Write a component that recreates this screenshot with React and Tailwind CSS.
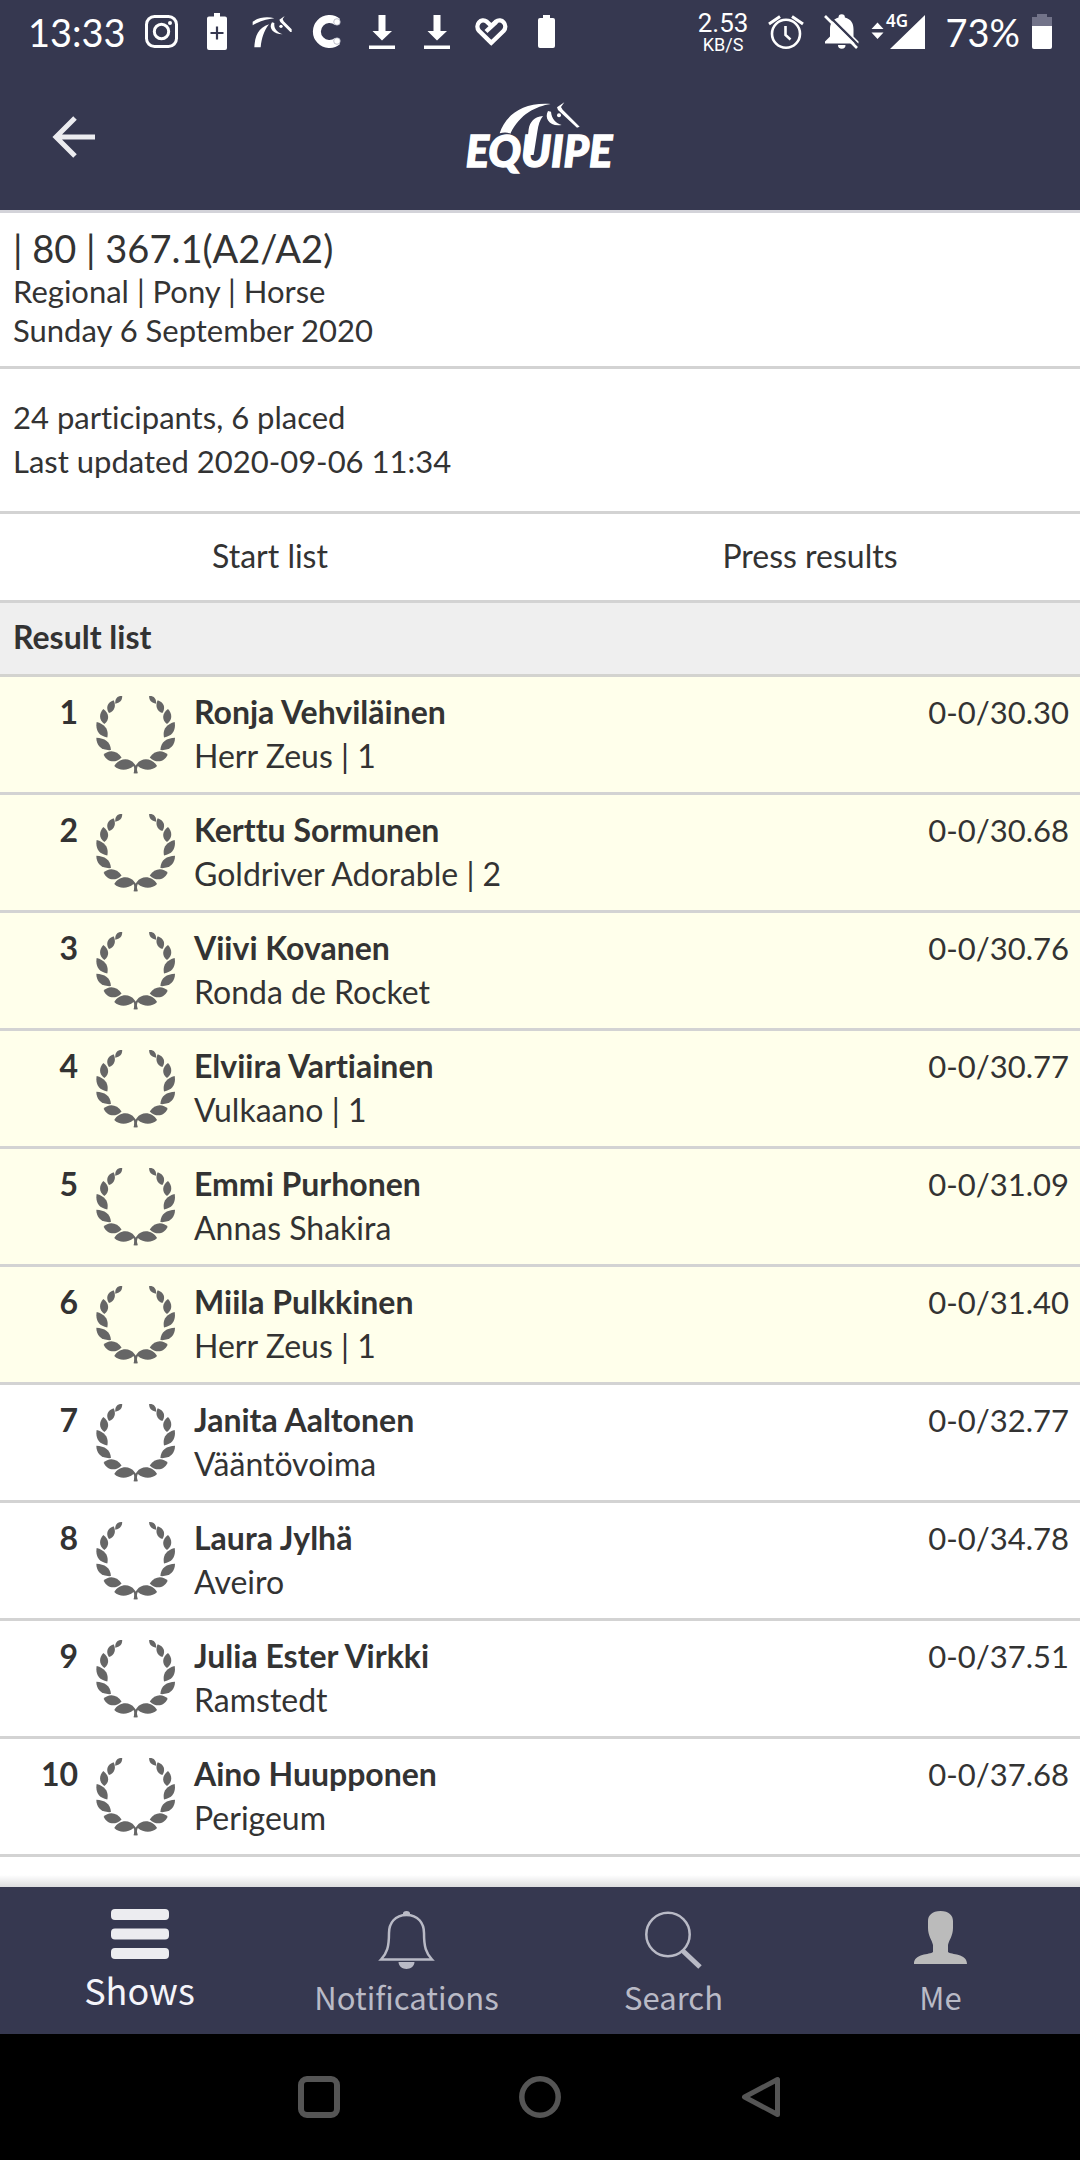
import React, { useState } from 'react';

const results = [
  { id: 1, rider: 'Ronja Vehviläinen', horse: 'Herr Zeus | 1', score: '0-0/30.30', placed: true },
  { id: 2, rider: 'Kerttu Sormunen', horse: 'Goldriver Adorable | 2', score: '0-0/30.68', placed: true },
  { id: 3, rider: 'Viivi Kovanen', horse: 'Ronda de Rocket', score: '0-0/30.76', placed: true },
  { id: 4, rider: 'Elviira Vartiainen', horse: 'Vulkaano | 1', score: '0-0/30.77', placed: true },
  { id: 5, rider: 'Emmi Purhonen', horse: 'Annas Shakira', score: '0-0/31.09', placed: true },
  { id: 6, rider: 'Miila Pulkkinen', horse: 'Herr Zeus | 1', score: '0-0/31.40', placed: true },
  { id: 7, rider: 'Janita Aaltonen', horse: 'Vääntövoima', score: '0-0/32.77', placed: false },
  { id: 8, rider: 'Laura Jylhä', horse: 'Aveiro', score: '0-0/34.78', placed: false },
  { id: 9, rider: 'Julia Ester Virkki', horse: 'Ramstedt', score: '0-0/37.51', placed: false },
  { id: 10, rider: 'Aino Huupponen', horse: 'Perigeum', score: '0-0/37.68', placed: false },
];

// Status bar icons
const InstagramIcon = () => (
  <svg width="33" height="33" viewBox="0 0 33 33" fill="none" stroke="currentColor" strokeWidth="3">
    <rect x="1.5" y="1.5" width="30" height="30" rx="8" />
    <circle cx="16.5" cy="16.5" r="7.2" />
    <circle cx="25" cy="8" r="2" fill="currentColor" stroke="none" />
  </svg>
);

const BatteryPlusIcon = () => (
  <svg width="20" height="37" viewBox="0 0 20 37">
    <path d="M7 0h6v3.500h5a2 2 0 0 1 2 2V35a2 2 0 0 1-2 2H2a2 2 0 0 1-2-2V5.500a2 2 0 0 1 2-2h5z" fill="currentColor" />
    <path d="M10 13.500v13M3.500 20h13" stroke="#363850" strokeWidth="2.200" />
  </svg>
);

const HorseIcon = () => (
  <svg width="40" height="33" viewBox="751 56 120 99" fill="currentColor">
    <path d="M753 76C775 61 800 61 818 66C790 70 775 75 753 87Z" />
    <path d="M758 153C760 118 770 95 802 84C786 105 780 125 777 153Z" />
    <path d="M811 78C799 95 815 114 843 114C826 107 816 98 818 80Z" />
    <circle cx="838" cy="90" r="5" />
    <path d="M849 59L833 70L836 77L866 107L870 107L870 99L846 75L843 68Z" />
  </svg>
);

const CIcon = () => (
  <svg width="30" height="33" viewBox="0 0 30 33" fill="none">
    <path d="M25.500 7A12.500 12.500 0 1 0 25.500 26" stroke="currentColor" strokeWidth="8" />
    <circle cx="25" cy="7" r="3.300" fill="currentColor" stroke="#9496a8" strokeWidth="0.600" />
    <circle cx="25" cy="26" r="3.300" fill="currentColor" stroke="#9496a8" strokeWidth="0.600" />
  </svg>
);

const DownloadIcon = () => (
  <svg width="26" height="34" viewBox="0 0 26 34" fill="currentColor">
    <path d="M9.500 0h7v16H23L13 25.500L3.500 16h6zM0 30.500h26V34H0z" />
  </svg>
);

const HeartIcon = () => (
  <svg width="33" height="28" viewBox="404 55 99 83" fill="none" stroke="currentColor" strokeWidth="13">
    <path d="M453 129L416 93C402 76 422 52 440 66L453 78L466 66C484 52 504 76 490 93Z" />
    <path d="M437 95L468 66" />
  </svg>
);

const BatteryIcon = () => (
  <svg width="17" height="33" viewBox="0 0 17 33" fill="currentColor">
    <path d="M5 0h7v3h3a2 2 0 0 1 2 2v26a2 2 0 0 1-2 2H2a2 2 0 0 1-2-2V5a2 2 0 0 1 2-2h3z" />
  </svg>
);

const AlarmIcon = () => (
  <svg width="36" height="34" viewBox="0 0 36 34" fill="none" stroke="currentColor" strokeWidth="2.600">
    <circle cx="18" cy="18.700" r="14" />
    <path d="M1 9L12 1.500M35 9L24 1.500" strokeWidth="3" />
    <path d="M17.500 11v9l5 4.500" />
  </svg>
);

const BellOffIcon = () => (
  <svg width="35" height="35" viewBox="0 0 35 35">
    <path d="M14.500 3.500a3.200 3.200 0 0 1 6.400 0C27 5 29.500 9.500 29.500 15v7.500l5 5v2H1v-2l5-5V15C6 9.500 9 5 14.500 3.500zM14 31h7.500a3.700 3.700 0 0 1-7.500 0z" fill="currentColor" />
    <path d="M3 0L35 32" stroke="#363850" strokeWidth="2.400" />
    <path d="M1 2L33 34" stroke="currentColor" strokeWidth="2.600" />
  </svg>
);

const SignalIcon = () => (
  <svg width="54" height="36" viewBox="0 0 54 36" fill="currentColor" className="overflow-visible">
    <path d="M6.500 8.500l6 6.500h-12zM.500 18.500h12l-6 6.500zM54 1v34H19z" />
    <text x="15" y="13" className="font-['Noto_Sans'] text-[17px] font-semibold">4G</text>
  </svg>
);

const BatteryLevelIcon = () => (
  <svg width="20" height="35" viewBox="0 0 20 35">
    <path d="M5 0h10v3h5v9H0V3h5z" fill="#727389" />
    <path d="M0 12h20v21a2 2 0 0 1-2 2H2a2 2 0 0 1-2-2z" fill="currentColor" />
  </svg>
);

const statusIcons = [InstagramIcon, BatteryPlusIcon, HorseIcon, CIcon, DownloadIcon, DownloadIcon, HeartIcon, BatteryIcon];

const Logo = () => (
  <svg width="150" height="72" viewBox="375 300 450 216" fill="currentColor" className="overflow-visible" role="img" aria-label="Equipe">
    <path d="M479 397C495 345 545 303 632 309C588 316 540 338 511 398C500 393 490 394 479 397Z" />
    <path d="M609 345C583 347 570 362 566 385L557 462L581 462L592 392C595 372 600 355 609 345Z" />
    <path d="M624 330C612 352 629 378 665 372C648 366 635 355 633 332Z" />
    <circle cx="657" cy="343" r="6" />
    <path d="M673 304L651 319L654 327L711 380L719 377L668 326L663 318Z" />
    <text x="377" y="499" stroke="currentColor" strokeWidth="4" className="font-['Lato'] text-[130px] font-black italic">
      EQUIPE
    </text>
  </svg>
);

const WreathHalf = () => (
  <>
    <path d="M129 45C115 44 107 52 108 68C122 66 129 58 129 45Z" />
    <path d="M103 58C85 64 78 80 89 96C107 92 111 72 103 58Z" />
    <path d="M72 84C59 98 58 117 75 129C91 118 91 98 72 84Z" />
    <path d="M52 123C48 146 57 165 84 170C89 148 79 130 52 123Z" />
    <path d="M51 171C51 195 67 210 95 208C94 183 76 172 51 171Z" />
    <path d="M73 222C87 206 113 207 127 230C110 247 85 247 73 222Z" />
    <path d="M105 256C118 233 150 228 166 250C172 256 175 268 174 278L163 278C167 268 166 262 163 256C145 271 120 271 105 256Z" />
  </>
);

const Wreath = () => (
  <svg width="79" height="79" viewBox="50 43 238 236" fill="#666666" aria-hidden="true">
    <WreathHalf />
    <g transform="translate(339 0) scale(-1 1)">
      <WreathHalf />
    </g>
  </svg>
);

// Tab bar icons
const ShowsIcon = () => (
  <svg width="58" height="50" viewBox="0 0 58 50" fill="#ececf0">
    <rect width="58" height="11" rx="4" />
    <rect y="19.500" width="58" height="11" rx="4" />
    <rect y="39" width="58" height="11" rx="4" />
  </svg>
);

const BellIcon = () => (
  <svg width="57" height="58" viewBox="0 0 57 58">
    <path d="M28.500 4C17 4 11 12 11 22C11 36 9 42 3 48.500H54C48 42 46 36 46 22C46 12 40 4 28.500 4Z" fill="none" stroke="currentColor" strokeWidth="2.500" />
    <path d="M25 5V2.500Q25 0 28.500 0T32 2.500V5zM20.500 51h16c-.500 9.300-15.500 9.300-16 0z" fill="currentColor" />
  </svg>
);

const SearchIcon = () => (
  <svg width="57" height="58" viewBox="0 0 57 58" fill="none" stroke="currentColor">
    <circle cx="23" cy="23.500" r="21.700" strokeWidth="2.500" />
    <path d="M38 40L55 56" strokeWidth="5" />
  </svg>
);

const MeIcon = () => (
  <svg width="53" height="53" viewBox="0 0 53 53" fill="#bbbbbb">
    <path d="M26.500 0C18 0 14 4.500 14 10V17C14 25 18 29 19 34V41C16 44 0 42 0 53H53C53 42 37 44 34 41V34C35 29 39 25 39 17V10C39 4.500 35 0 26.500 0Z" />
  </svg>
);

const tabs = [
  { name: 'Shows', Icon: ShowsIcon },
  { name: 'Notifications', Icon: BellIcon },
  { name: 'Search', Icon: SearchIcon },
  { name: 'Me', Icon: MeIcon },
];

const App = () => {
  const [activeTab, setActiveTab] = useState('Shows');

  return (
    <div className="flex min-h-screen flex-col bg-white font-['Lato',sans-serif] text-[32px] leading-[44px] text-[#333333] [font-variant-ligatures:none]">
      <header className="border-b-[3px] border-[#d3d3d9] bg-[#363850] text-white">
        {/* Status bar */}
        <div className="flex h-[63px] items-center justify-between pr-7 pl-7">
          <div className="flex items-center">
            <span className="w-[106px] text-[38px]">13:33</span>
            {statusIcons.map((Icon, index) => (
              <span key={index} className="flex w-[55px] justify-center">
                <Icon />
              </span>
            ))}
          </div>
          <div className="flex items-center">
            <div className="mr-5 flex flex-col items-center font-['Roboto',sans-serif]">
              <span className="text-[26px] leading-[26px]">2.53</span>
              <span className="text-[18px] leading-[18px]">KB/S</span>
            </div>
            <div className="flex items-center gap-5">
              <AlarmIcon />
              <BellOffIcon />
            </div>
            <div className="ml-3 flex items-center gap-5">
              <SignalIcon />
              <span className="text-[38px]">73%</span>
            </div>
            <div className="ml-3">
              <BatteryLevelIcon />
            </div>
          </div>
        </div>

        <div className="grid h-[147px] grid-cols-3 items-center">
          <button type="button" aria-label="Back" className="ml-[52px] justify-self-start">
            <svg width="43" height="42" viewBox="0 0 43 42" fill="none" stroke="#ececf0" strokeWidth="5">
              <path d="M43 21H5M23 2L4 21L23 40" />
            </svg>
          </button>
          <div className="justify-self-center">
            <Logo />
          </div>
        </div>
      </header>

      <main className="flex-1">
        <section className="border-b-[3px] border-[#d3d3d3] px-[13px] pt-[11px] pb-4 text-[31px] leading-[39px]">
          <h1 className="text-[38px] leading-[48px]">| 80 | 367.1(A2/A2)</h1>
          <p>Regional | Pony | Horse</p>
          <p>Sunday 6 September 2020</p>
        </section>

        <section className="border-b-[3px] border-[#d3d3d3] px-[13px] pt-[26px] pb-7 text-[31px]">
          <p>24 participants, 6 placed</p>
          <p>Last updated 2020-09-06 11:34</p>
        </section>

        <nav className="grid grid-cols-2 border-b-[3px] border-[#d3d3d3] text-center">
          <a href="#start-list" className="pt-5 pb-[22px]">Start list</a>
          <a href="#press-results" className="pt-5 pb-[22px]">Press results</a>
        </nav>

        <h2 className="border-b-[3px] border-[#d3d3cf] bg-[#efefef] px-[13px] pt-3 pb-[15px] font-bold">Result list</h2>

        <table className="w-full border-separate border-spacing-0">
          <tbody>
            {results.map((item) => (
              <tr key={item.id} className={item.placed ? 'bg-[#ffffeb]' : 'bg-white'}>
                <td className="w-[78px] border-b-[3px] border-[#d3d3d3] pt-[13px] pb-[14px] text-right align-top font-bold">{item.id}</td>
                <td className="w-[116px] border-b-[3px] border-[#d3d3d3] pt-[18px] pl-[18px] align-top">
                  <Wreath />
                </td>
                <td className="border-b-[3px] border-[#d3d3d3] pt-[13px] pb-[14px] align-top">
                  <p className="font-bold">{item.rider}</p>
                  <p>{item.horse}</p>
                </td>
                <td className="border-b-[3px] border-[#d3d3d3] pt-[13px] pr-[11px] text-right align-top text-[31px]">{item.score}</td>
              </tr>
            ))}
          </tbody>
        </table>
      </main>

      <footer>
        <div className="h-3 bg-linear-to-b from-white to-[#dddddf]" />
        <nav className="grid h-[147px] grid-cols-4 bg-[#363850] px-[6px] font-['Noto_Sans_CJK_SC',sans-serif]">
          {tabs.map(({ name, Icon }) => (
            <button
              key={name}
              type="button"
              onClick={() => setActiveTab(name)}
              className={
                activeTab === name
                  ? 'flex flex-col items-center pt-[22px] text-[36px] text-[#f4f4fa]'
                  : 'flex flex-col items-center pt-6 text-[31px] text-[#b9bac6]'
              }
            >
              <span className={activeTab === name ? 'flex h-[58px] items-start' : 'flex h-16 items-start'}>
                <Icon />
              </span>
              <span>{name}</span>
            </button>
          ))}
        </nav>

        {/* Android navigation */}
        <div className="flex h-[126px] items-center justify-center bg-black text-[#555555]">
          <button type="button" aria-label="Recent apps" className="flex w-[221px] justify-center">
            <svg width="42" height="42" viewBox="0 0 42 42" fill="none" stroke="currentColor" strokeWidth="6">
              <rect x="3" y="3" width="36" height="36" rx="6" />
            </svg>
          </button>
          <button type="button" aria-label="Home" className="flex w-[221px] justify-center">
            <svg width="42" height="42" viewBox="0 0 42 42" fill="none" stroke="currentColor" strokeWidth="5.500">
              <circle cx="21" cy="21" r="18.200" />
            </svg>
          </button>
          <button type="button" aria-label="Back" className="flex w-[221px] justify-center">
            <svg width="40" height="42" viewBox="0 0 40 42" fill="none" stroke="currentColor" strokeWidth="5" strokeLinejoin="round">
              <path d="M36.500 3.500V38.500L3.500 21Z" />
            </svg>
          </button>
        </div>
      </footer>
    </div>
  );
};

export default App;
